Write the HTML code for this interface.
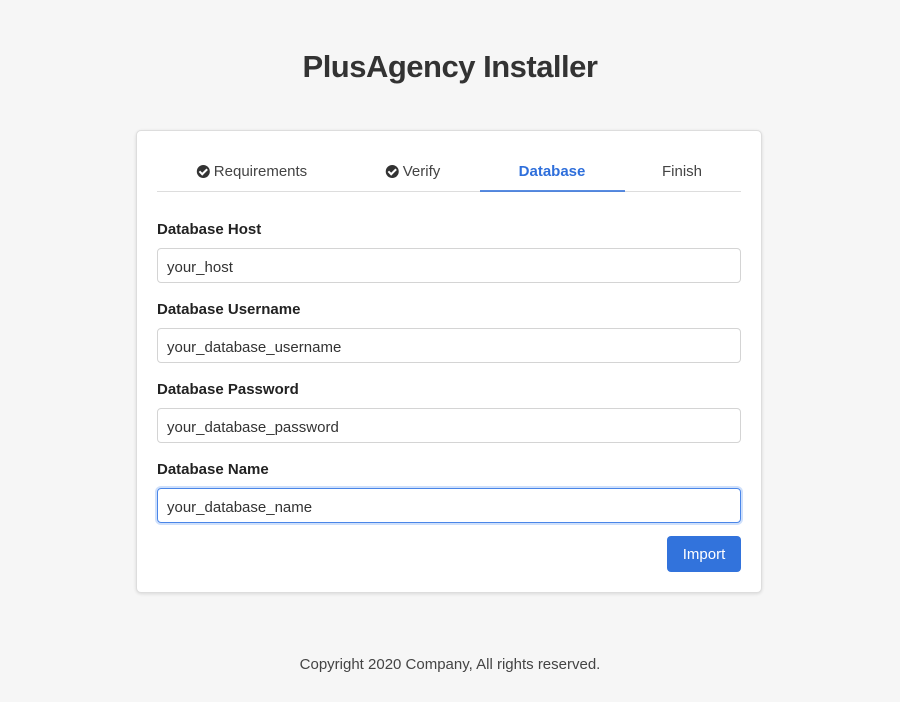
<!DOCTYPE html>
<html><head><meta charset="utf-8"><style>
*{box-sizing:border-box;margin:0;padding:0}
body{width:900px;height:702px;background:#f6f6f6;font-family:"Liberation Sans",sans-serif;color:#333;position:relative}
h1{position:absolute;top:49px;left:0;width:900px;text-align:center;font-size:31px;font-weight:bold;color:#333;letter-spacing:-0.5px}
.card{position:absolute;left:136px;top:130px;width:626px;height:463px;background:#fff;border:1px solid #ddd;border-radius:5px;box-shadow:0 1px 3px rgba(0,0,0,.12)}
.tabs{position:absolute;left:20px;top:20px;width:584px;height:41px;border-bottom:1px solid #ddd}
.tab{position:absolute;top:12px;font-size:15px;color:#444;white-space:nowrap;transform:translateX(-50%);display:flex;align-items:center;gap:4px}
.tab.a{color:#2f6fdb;font-weight:bold}
.ul{position:absolute;left:323px;width:145px;top:39px;height:2px;background:#2f6fdb;opacity:.8}
.chk{width:13px;height:13px;border-radius:50%;background:#333;display:inline-block;position:relative}
.chk:after{content:"";position:absolute;left:4px;top:2px;width:3px;height:6px;border:solid #fff;border-width:0 2px 2px 0;transform:rotate(45deg)}
label{position:absolute;left:20px;font-size:15px;font-weight:bold;color:#222}
.in{position:absolute;left:20px;width:584px;height:35px;border:1px solid #d4d4d4;border-radius:4px;font-size:15px;padding:10px 9px 0;color:#333}
.in.f{border-color:#4a86e8;box-shadow:0 0 0 2px #cfe0fb}
.btn{position:absolute;left:530px;top:405px;width:74px;height:36px;background:#3273dc;color:#fff;border-radius:4px;font-size:15px;text-align:center;line-height:38px}
.foot{position:absolute;top:656px;width:900px;text-align:center;font-size:15px;color:#444}
</style></head><body>
<h1>PlusAgency Installer</h1>
<div class="card">
<div class="tabs">
<div class="tab" style="left:95px"><span class="chk"></span>Requirements</div>
<div class="tab" style="left:256px"><span class="chk"></span>Verify</div>
<div class="tab a" style="left:395px">Database</div>
<div class="tab" style="left:525px">Finish</div>
<div class="ul"></div>
</div>
<label style="top:90px">Database Host</label><div class="in" style="top:117px">your_host</div>
<label style="top:170px">Database Username</label><div class="in" style="top:197px">your_database_username</div>
<label style="top:250px">Database Password</label><div class="in" style="top:277px">your_database_password</div>
<label style="top:330px">Database Name</label><div class="in f" style="top:357px">your_database_name</div>
<div class="btn">Import</div>
</div>
<div class="foot">Copyright 2020 Company, All rights reserved.</div>
</body></html>
